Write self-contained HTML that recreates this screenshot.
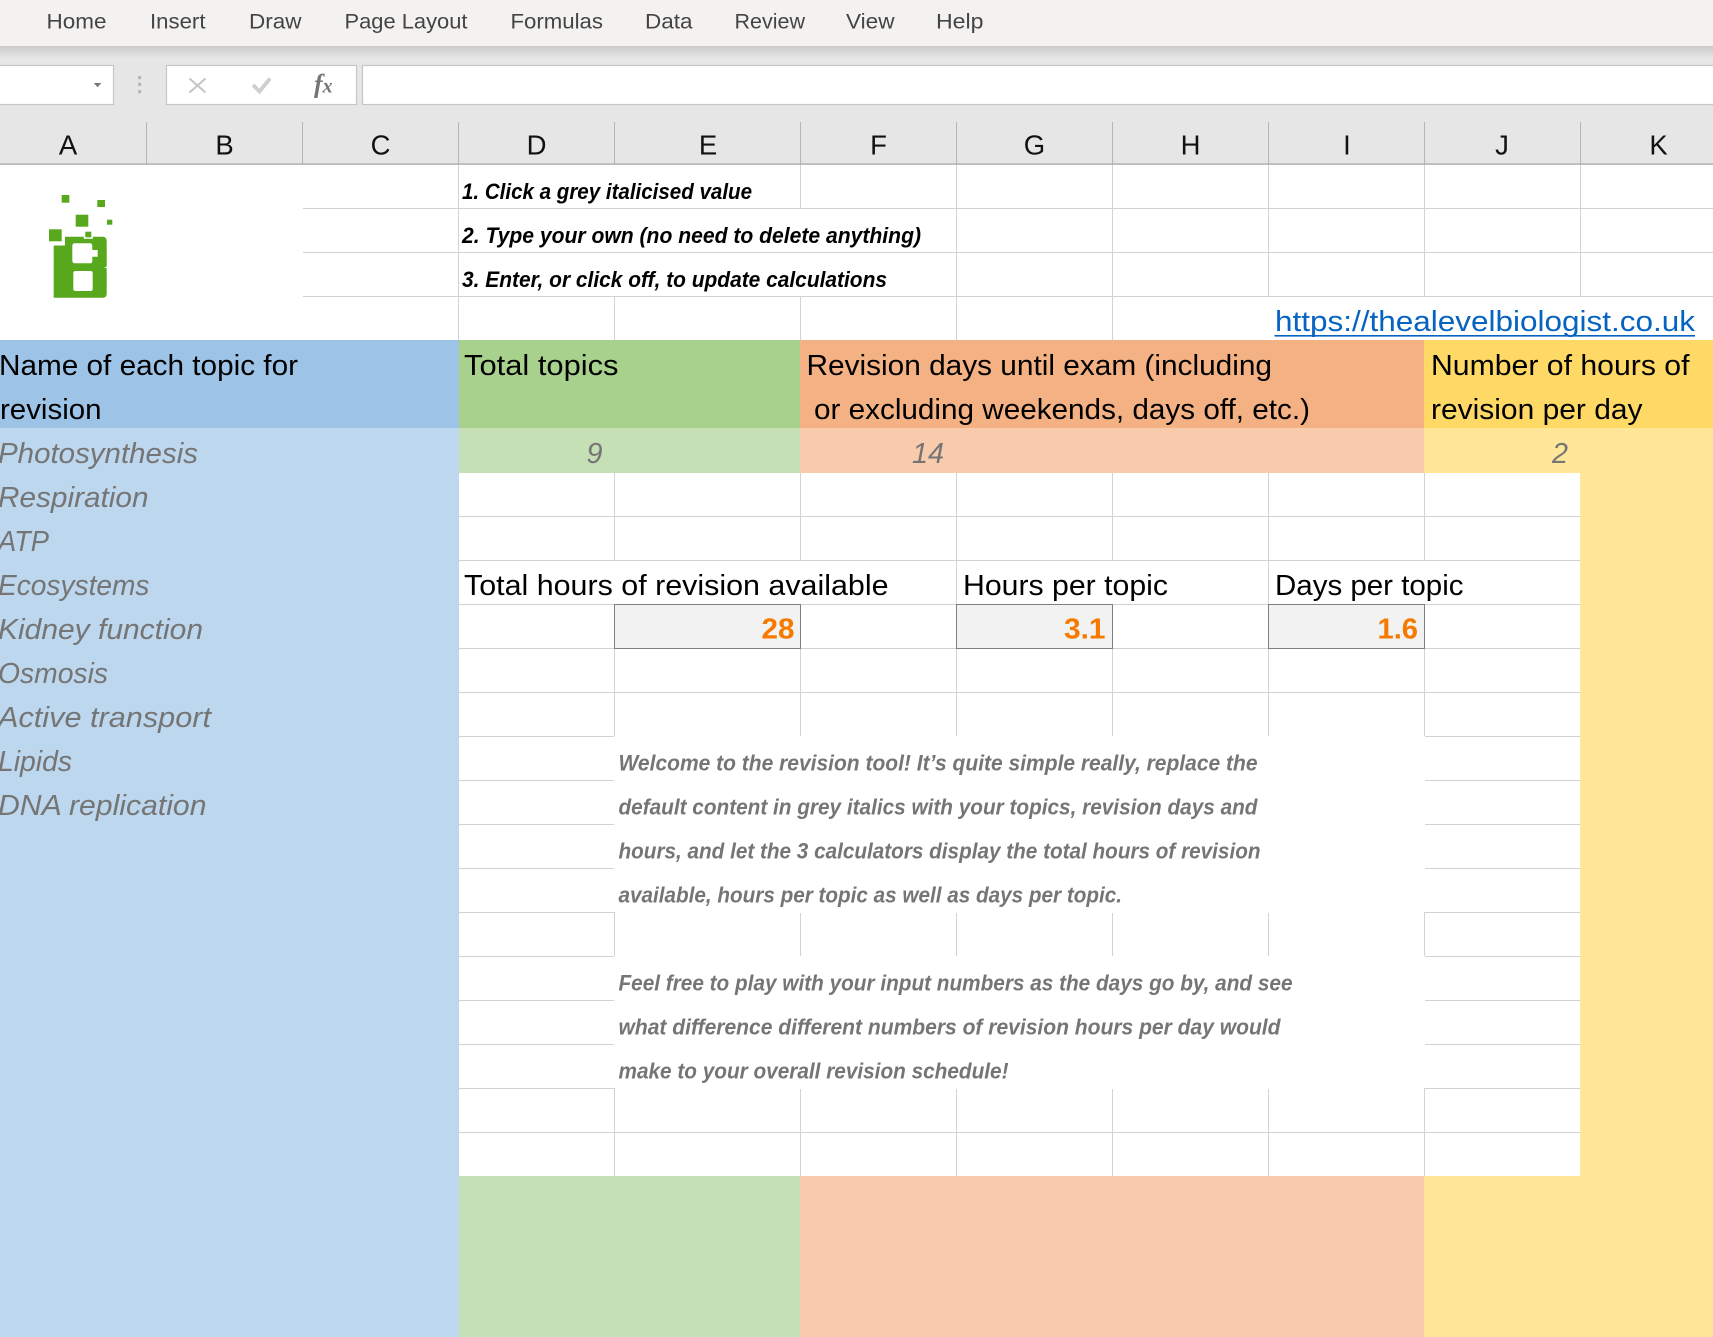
<!DOCTYPE html>
<html lang="en"><head><meta charset="utf-8"><title>Revision tool</title>
<style>
html,body{margin:0;padding:0;background:#fff;width:1713px;height:1337px;overflow:hidden}
svg{display:block;position:absolute;left:0;top:0}
text{font-family:"Liberation Sans",Arial,sans-serif;white-space:pre}
.tab{font-size:21px;fill:#444}
.col{font-size:27.5px;fill:#111;text-anchor:middle}
.h{font-size:28.8px;fill:#000}
.t{font-size:28.8px;fill:#757575;font-style:italic}
.i{font-size:22.5px;font-weight:bold;font-style:italic;fill:#000}
.w{font-size:22.5px;font-weight:bold;font-style:italic;fill:#757575}
.o{font-size:28.5px;font-weight:bold;fill:#f67a00}
</style></head><body>
<svg width="1713" height="1337" viewBox="0 0 1713 1337" xmlns="http://www.w3.org/2000/svg">
<defs><linearGradient id="s" x1="0" y1="0" x2="0" y2="1"><stop offset="0" stop-color="#cbcbcb"/><stop offset="1" stop-color="#e6e6e6"/></linearGradient></defs>
<rect width="1713" height="1337" fill="#fff"/>
<!-- ribbon -->
<rect x="0" y="46" width="1713" height="118" fill="#e6e6e6"/>
<rect x="0" y="46" width="1713" height="12" fill="url(#s)"/>
<rect x="0" y="0" width="1713" height="46" fill="#f3f2f1"/>
<text class="tab" x="46.5" y="28.5" textLength="60" lengthAdjust="spacingAndGlyphs">Home</text>
<text class="tab" x="150" y="28.5" textLength="55.5" lengthAdjust="spacingAndGlyphs">Insert</text>
<text class="tab" x="249" y="28.5" textLength="52.5" lengthAdjust="spacingAndGlyphs">Draw</text>
<text class="tab" x="344.5" y="28.5" textLength="123" lengthAdjust="spacingAndGlyphs">Page Layout</text>
<text class="tab" x="510.5" y="28.5" textLength="92.5" lengthAdjust="spacingAndGlyphs">Formulas</text>
<text class="tab" x="645" y="28.5" textLength="47.5" lengthAdjust="spacingAndGlyphs">Data</text>
<text class="tab" x="734.5" y="28.5" textLength="70.5" lengthAdjust="spacingAndGlyphs">Review</text>
<text class="tab" x="846" y="28.5" textLength="48.5" lengthAdjust="spacingAndGlyphs">View</text>
<text class="tab" x="936" y="28.5" textLength="47.5" lengthAdjust="spacingAndGlyphs">Help</text>
<!-- formula bar -->
<rect x="-2" y="65.5" width="115.5" height="39" fill="#fff" stroke="#c6c6c6" stroke-width="1.2"/>
<path d="M93.8 83H101.4L97.6 87.3Z" fill="#777"/>
<rect x="138" y="76" width="3.2" height="3.3" fill="#b8b8b8"/><rect x="138" y="82.7" width="3.2" height="3.3" fill="#b8b8b8"/><rect x="138" y="90" width="3.2" height="3.3" fill="#b8b8b8"/>
<rect x="166.5" y="65.5" width="190" height="39" fill="#fff" stroke="#c6c6c6" stroke-width="1.2"/>
<rect x="362.5" y="65.5" width="1360" height="39" fill="#fff" stroke="#c6c6c6" stroke-width="1.2"/>
<path d="M189.5 78.5L205.5 92.5M205.5 78.5L189.5 92.5" stroke="#c4c4c4" stroke-width="2" fill="none"/>
<path d="M253 85L259.5 91.5L270 78.5" stroke="#cfcfcf" stroke-width="3.8" fill="none"/>
<text x="314" y="92.3" style="font-family:'Liberation Serif',serif;font-style:italic;font-weight:bold;fill:#757575"><tspan font-size="26">f</tspan><tspan font-size="20" dx="0">x</tspan></text>
<!-- col headers -->
<path d="M146.5 122V164M302.5 122V164M458.5 122V164M614.5 122V164M800.5 122V164M956.5 122V164M1112.5 122V164M1268.5 122V164M1424.5 122V164M1580.5 122V164" stroke="#b4b4b4" stroke-width="1" shape-rendering="crispEdges"/>
<rect x="0" y="163.5" width="1713" height="1.2" fill="#a0a0a0"/>
<text class="col" x="68" y="154.5">A</text><text class="col" x="224.5" y="154.5">B</text><text class="col" x="380.5" y="154.5">C</text><text class="col" x="536.5" y="154.5">D</text><text class="col" x="708" y="154.5">E</text><text class="col" x="878.5" y="154.5">F</text><text class="col" x="1034.5" y="154.5">G</text><text class="col" x="1190.5" y="154.5">H</text><text class="col" x="1347" y="154.5">I</text><text class="col" x="1502" y="154.5">J</text><text class="col" x="1658.5" y="154.5">K</text>
<!-- colour blocks -->
<rect x="0" y="340" width="459" height="88" fill="#9dc3e6"/>
<rect x="0" y="428" width="459" height="909" fill="#bdd7ee"/>
<rect x="459" y="340" width="341" height="88" fill="#a9d18e"/>
<rect x="459" y="428" width="341" height="45" fill="#c5e0b4"/>
<rect x="459" y="1176" width="341" height="161" fill="#c5e0b4"/>
<rect x="800" y="340" width="624" height="88" fill="#f4b183"/>
<rect x="800" y="428" width="624" height="45" fill="#f8cbad"/>
<rect x="800" y="1176" width="624" height="161" fill="#f8cbad"/>
<rect x="1424" y="340" width="289" height="88" fill="#ffd966"/>
<rect x="1424" y="428" width="289" height="909" fill="#ffe699"/>
<rect x="459" y="473" width="1121" height="703" fill="#fff"/>
<!-- gridlines -->
<g stroke="#d2d2d2" stroke-width="1" shape-rendering="crispEdges" fill="none">
<path d="M303 208.5H1713M303 252.5H1713M303 296.5H1713"/>
<path d="M458.5 165V340"/>
<path d="M614.5 297V340"/>
<path d="M800.5 165V208M800.5 297V340"/>
<path d="M956.5 165V340M1112.5 165V340"/>
<path d="M1268.5 165V296M1424.5 165V296M1580.5 165V296"/>
<path d="M459 516.5H1580M459 560.5H1580M459 604.5H1580M459 648.5H1580M459 692.5H1580"/>
<path d="M614.5 473V560M800.5 473V560M956.5 473V736M1112.5 473V560M1268.5 473V736M1424.5 473V560"/>
<path d="M614.5 648V736M800.5 604V736M1112.5 648V736M1424.5 604V736"/>
<path d="M459 736.5H614M1425 736.5H1580M459 780.5H614M1425 780.5H1580M459 824.5H614M1425 824.5H1580M459 868.5H614M1425 868.5H1580M459 912.5H614M1425 912.5H1580"/>
<path d="M614.5 912V956M800.5 913V956M956.5 913V956M1112.5 913V956M1268.5 913V956M1424.5 912V956"/>
<path d="M459 956.5H614M1425 956.5H1580M459 1000.5H614M1425 1000.5H1580M459 1044.5H614M1425 1044.5H1580M459 1088.5H614M1425 1088.5H1580"/>
<path d="M459 1132.5H1580"/>
<path d="M614.5 1088V1176M800.5 1089V1176M956.5 1089V1176M1112.5 1089V1176M1268.5 1089V1176M1424.5 1088V1176"/>
</g>
<!-- result boxes -->
<rect x="614.5" y="604.5" width="186" height="44" fill="#f2f2f2" stroke="#7f7f7f" shape-rendering="crispEdges"/>
<rect x="956.5" y="604.5" width="156" height="44" fill="#f2f2f2" stroke="#7f7f7f" shape-rendering="crispEdges"/>
<rect x="1268.5" y="604.5" width="156" height="44" fill="#f2f2f2" stroke="#7f7f7f" shape-rendering="crispEdges"/>
<!-- logo -->
<g fill="#58a81d">
<path fill-rule="evenodd" d="M65 236.7H102.5Q106.7 236.7 106.7 241V266.7L104 267.3L106.7 268.3V294Q106.7 297.7 102.5 297.7H53.7V245.5H65ZM75 243.3Q72.3 243.3 72.3 246V260.5Q72.3 263.3 75 263.3H90.5Q92.3 263.3 92.3 261V256.7H97.7V250H92.3V246Q92.3 243.3 90 243.3ZM75.5 271Q73.3 271 73.3 273V288.7Q73.3 291 75.5 291H90.5Q92.7 291 92.7 288.7V273Q92.7 271 90.5 271Z"/>
<rect x="61.7" y="195" width="7.6" height="7.7"/>
<rect x="97.3" y="200" width="7.7" height="7"/>
<rect x="75.7" y="214.7" width="12.6" height="12"/>
<rect x="107" y="219.7" width="5.3" height="5"/>
<rect x="49" y="229.3" width="12.7" height="12" stroke="#fff" stroke-width="1.5" paint-order="stroke"/>
<rect x="85.3" y="231.7" width="6" height="5.6" stroke="#fff" stroke-width="3" paint-order="stroke"/>
</g>
<!-- instructions -->
<text class="i" x="462" y="199" textLength="290" lengthAdjust="spacingAndGlyphs">1. Click a grey italicised value</text>
<text class="i" x="462" y="243" textLength="459" lengthAdjust="spacingAndGlyphs">2. Type your own (no need to delete anything)</text>
<text class="i" x="462" y="287" textLength="425" lengthAdjust="spacingAndGlyphs">3. Enter, or click off, to update calculations</text>
<text x="1275" y="331" style="font-size:29px;fill:#0563c1" textLength="420" lengthAdjust="spacingAndGlyphs">https://thealevelbiologist.co.uk</text>
<rect x="1274.5" y="335" width="420.5" height="1.6" fill="#0563c1"/>
<!-- headers -->
<text class="h" x="-1" y="375" textLength="299" lengthAdjust="spacingAndGlyphs">Name of each topic for</text>
<text class="h" x="0" y="419" textLength="101.5" lengthAdjust="spacingAndGlyphs">revision</text>
<text class="h" x="464" y="375" textLength="154.5" lengthAdjust="spacingAndGlyphs">Total topics</text>
<text class="h" x="806.5" y="375" textLength="465.5" lengthAdjust="spacingAndGlyphs">Revision days until exam (including</text>
<text class="h" x="814" y="419" textLength="496" lengthAdjust="spacingAndGlyphs">or excluding weekends, days off, etc.)</text>
<text class="h" x="1431" y="375" textLength="258.5" lengthAdjust="spacingAndGlyphs">Number of hours of</text>
<text class="h" x="1431" y="419" textLength="211.5" lengthAdjust="spacingAndGlyphs">revision per day</text>
<!-- values -->
<text class="t" x="586.5" y="463" textLength="16" lengthAdjust="spacingAndGlyphs">9</text>
<text class="t" x="912" y="463" textLength="32" lengthAdjust="spacingAndGlyphs">14</text>
<text class="t" x="1552" y="463" textLength="16" lengthAdjust="spacingAndGlyphs">2</text>
<!-- topics -->
<text class="t" x="-2" y="463" textLength="200" lengthAdjust="spacingAndGlyphs">Photosynthesis</text>
<text class="t" x="-2" y="507" textLength="150.5" lengthAdjust="spacingAndGlyphs">Respiration</text>
<text class="t" x="-2" y="551" textLength="51" lengthAdjust="spacingAndGlyphs">ATP</text>
<text class="t" x="-2" y="595" textLength="151.5" lengthAdjust="spacingAndGlyphs">Ecosystems</text>
<text class="t" x="-2" y="639" textLength="205" lengthAdjust="spacingAndGlyphs">Kidney function</text>
<text class="t" x="-2" y="683" textLength="110" lengthAdjust="spacingAndGlyphs">Osmosis</text>
<text class="t" x="-2" y="727" textLength="213" lengthAdjust="spacingAndGlyphs">Active transport</text>
<text class="t" x="-2" y="771" textLength="74" lengthAdjust="spacingAndGlyphs">Lipids</text>
<text class="t" x="-2" y="815" textLength="208.5" lengthAdjust="spacingAndGlyphs">DNA replication</text>
<!-- calculators -->
<text class="h" x="464" y="595" textLength="424.5" lengthAdjust="spacingAndGlyphs">Total hours of revision available</text>
<text class="h" x="963" y="595" textLength="205" lengthAdjust="spacingAndGlyphs">Hours per topic</text>
<text class="h" x="1275" y="595" textLength="188.5" lengthAdjust="spacingAndGlyphs">Days per topic</text>
<text class="o" x="761.5" y="638.5" textLength="33" lengthAdjust="spacingAndGlyphs">28</text>
<text class="o" x="1064" y="638.5" textLength="41.5" lengthAdjust="spacingAndGlyphs">3.1</text>
<text class="o" x="1377.5" y="638.5" textLength="40.5" lengthAdjust="spacingAndGlyphs">1.6</text>
<!-- welcome -->
<text class="w" x="618.5" y="770.5" textLength="639" lengthAdjust="spacingAndGlyphs">Welcome to the revision tool! It’s quite simple really, replace the</text>
<text class="w" x="618.5" y="814.5" textLength="639" lengthAdjust="spacingAndGlyphs">default content in grey italics with your topics, revision days and</text>
<text class="w" x="618.5" y="858.5" textLength="642" lengthAdjust="spacingAndGlyphs">hours, and let the 3 calculators display the total hours of revision</text>
<text class="w" x="618.5" y="902.5" textLength="503.5" lengthAdjust="spacingAndGlyphs">available, hours per topic as well as days per topic.</text>
<text class="w" x="618.5" y="990.5" textLength="674" lengthAdjust="spacingAndGlyphs">Feel free to play with your input numbers as the days go by, and see</text>
<text class="w" x="618.5" y="1034.5" textLength="662" lengthAdjust="spacingAndGlyphs">what difference different numbers of revision hours per day would</text>
<text class="w" x="618.5" y="1078.5" textLength="390" lengthAdjust="spacingAndGlyphs">make to your overall revision schedule!</text>
</svg>
</body></html>
